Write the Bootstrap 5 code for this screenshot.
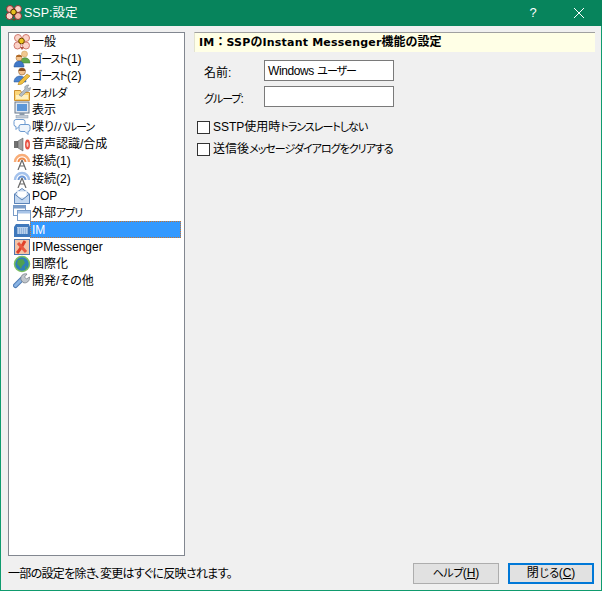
<!DOCTYPE html>
<html lang="ja">
<head>
    <meta charset="UTF-8">
    <title>SSP:設定</title>
    <link href="https://cdn.jsdelivr.net/npm/bootstrap@5.3.2/dist/css/bootstrap.min.css" rel="stylesheet">
    <style>
        html, body { height: 100%; }
        body {
            background: #f0f0f0;
            font-family: "Liberation Sans", "Noto Sans CJK JP", sans-serif;
            font-size: 12px;
            font-feature-settings: "palt";
            color: #000;
            overflow: hidden;
        }
        /* MS PGothic kana are much narrower than Noto's */
        .kana-tight { font-size: 11px; letter-spacing: -1px; }
        .dlg-window { height: 591px; border: 1px solid #0f9b6e; border-top: 0; }
        .dlg-title { height: 26px; background: #07845c; color: #fff; font-size: 12.5px; margin: 0 -1px; }
        .dlg-title svg { display: block; margin: 0 1px 0 5px; }
        .dlg-help { width: 46px; text-align: center; font-size: 13px; }
        .dlg-close { width: 46px; }
        .dlg-close svg { margin: 0; }
        .dlg-body { height: 564px; padding: 6px 6px 0 7px; }
        .tree-box { width: 177px; height: 524px; flex: none; background: #fff; border: 1px solid #828790; padding-right: 3px; }
        .tree-row { height: 17.07px; white-space: nowrap; }
        .tree-row svg { width: 18px; height: 18px; flex: none; margin: 0 -1px 0 4px; display: block; }
        .tree-label { padding: 0 1px 0 2px; height: 17px; line-height: 18px; }
        .tree-row.is-active .tree-label { flex: 1; background: #3399ff; color: #fff; outline: 1px dotted #c9732b; outline-offset: -1px; }
        .panel-col { flex: 1; padding-left: 9px; }
        .panel-head { height: 20px; background: #ffffe6; border-top: 1px solid #a0a0a0; border-left: 1px solid #e3e3d0; font-family: "DejaVu Sans", "Noto Sans CJK JP", sans-serif; font-feature-settings: normal; font-weight: 700; font-size: 12px; line-height: 19px; padding-left: 4px; white-space: nowrap; }
        .head-latin { font-size: 11px; letter-spacing: .2px; }
        .form-wrap { padding: 8px 0 4px 10px; }
        .field-row { height: 26px; }
        .field-label { width: 60px; padding-top: 4px; }
        .field-box { width: 130px; height: 21px; background: #fff; border: 1px solid #7a7a7a; padding-left: 3px; line-height: 20px; }
        .field-latin { letter-spacing: -.4px; }
        .check-row { height: 22px; white-space: nowrap; padding-left: 3px; }
        .check-mark { width: 13px; height: 13px; background: #fff; border: 1px solid #333; margin-right: 3px; }
        .dlg-foot { height: 33px; padding: 2px 1px 0 0; }
        .foot-note { letter-spacing: -.7px; }
        .foot-btn { width: 86px; height: 21px; background: #e1e1e1; border: 1px solid #adadad; border-radius: 0; padding: 0; font-size: 12px; line-height: 19px; color: #000; }
        .foot-btn.is-default { border: 2px solid #0078d7; line-height: 17px; margin-left: 9px; }
    </style>
</head>
<body>

<div class="dlg-window">
    <div class="dlg-title d-flex align-items-center">
        <svg width="18" height="18" viewBox="0 0 18 18"><circle cx="5" cy="5" r="3.5" fill="#f3b6a6" stroke="#8c2f2f"/><circle cx="13" cy="5" r="3.5" fill="#fbd7cb" stroke="#8c2f2f"/><circle cx="4.500" cy="12" r="3.500" fill="#fbd7cb" stroke="#8c2f2f"/><circle cx="13" cy="12" r="3.500" fill="#f3b6a6" stroke="#8c2f2f"/><path d="M7 15l2 2 2-2" fill="#7a3a20"/><circle cx="8.500" cy="8" r="2.800" fill="#e8c020" stroke="#503000"/></svg>
        <span class="flex-grow-1">SSP:設定</span>
        <span class="dlg-help">?</span>
        <span class="dlg-close d-flex justify-content-center"><svg width="12" height="12" viewBox="0 0 12 12"><path d="M1 1l10 10M11 1L1 11" stroke="#fff" fill="none"/></svg></span>
    </div>
    <div class="dlg-body">
        <div class="d-flex">
            <div class="tree-box">
                <div class="tree-row d-flex"><svg viewBox="0 0 18 18"><circle cx="5" cy="5" r="3.500" fill="#fbd3c8" stroke="#d07a70"/><circle cx="13" cy="5" r="3.500" fill="#fbd3c8" stroke="#d07a70"/><circle cx="4.500" cy="12.500" r="3.500" fill="#fbd3c8" stroke="#d07a70"/><circle cx="13" cy="12.500" r="3.500" fill="#fbd3c8" stroke="#d07a70"/><path d="M7 14l2 3 2-3" fill="#b05040"/><circle cx="8.500" cy="8" r="2.800" fill="#eec420" stroke="#6a4a00"/></svg><span class="tree-label">一般</span></div>
                <div class="tree-row d-flex"><svg viewBox="0 0 18 18"><circle cx="11.500" cy="4" r="3" fill="#f0c890" stroke="#c89a50" stroke-width=".5"/><path d="M7 13c0-7 10-7 10 0z" fill="#62a84a" stroke="#3f7a30" stroke-width=".5"/><circle cx="6" cy="8" r="3" fill="#f4c490" stroke="#a06a30" stroke-width=".5"/><path d="M3 7c0-3 6-3 6 0z" fill="#b06a28"/><path d="M1 17c0-8 10-8 10 0z" fill="#3f78c8" stroke="#2a5490" stroke-width=".5"/></svg><span class="tree-label"><span class="kana-tight">ゴースト</span>(1)</span></div>
                <div class="tree-row d-flex"><svg viewBox="0 0 18 18"><circle cx="9" cy="4.500" r="3.500" fill="#f4c490" stroke="#7a4a20" stroke-width=".5"/><path d="M5.500 4c0-4 7-4 7 0z" fill="#8a5020"/><path d="M1 15c0-8 12-8 12 0z" fill="#4a84d0" stroke="#2a5490" stroke-width=".5"/><path d="M6 15l8-8 3 2-8 8-4 1z" fill="#f0c040" stroke="#a07010" stroke-width=".5"/></svg><span class="tree-label"><span class="kana-tight">ゴースト</span>(2)</span></div>
                <div class="tree-row d-flex"><svg viewBox="0 0 18 18"><path d="M1.500 6.500h6l1 2h8v8h-15z" fill="#fbd67a" stroke="#cc8f30"/><rect x="3" y="11" width="12" height="4" fill="#fff0c0"/><path d="M6 11l6-6c-1-3 1-4 4-4l-1.500 2 1 1.500 2-1c0 3-2 4.500-4 4l-5 5z" fill="#b4bcc4" stroke="#737b84" stroke-width=".5"/></svg><span class="tree-label"><span class="kana-tight">フォルダ</span></span></div>
                <div class="tree-row d-flex"><svg viewBox="0 0 18 18"><rect x="2" y="1" width="14" height="11" fill="#e2e8f0" stroke="#68788c"/><rect x="4" y="3" width="10" height="7" fill="#5c96d8"/><rect x="6.500" y="12" width="5" height="2" fill="#8a98a8"/><rect x="3" y="14.500" width="12" height="2.500" fill="#c4ccd6" stroke="#8a98a8" stroke-width=".5"/></svg><span class="tree-label">表示</span></div>
                <div class="tree-row d-flex"><svg viewBox="0 0 18 18"><path d="M3 1.500h7a2 2 0 0 1 2 2v3a2 2 0 0 1-2 2h-4l-3 3v-3a2 2 0 0 1-2-2v-3a2 2 0 0 1 2-2z" fill="#fff" stroke="#6c9ad0"/><path d="M8 6.500h7a2 2 0 0 1 2 2v3a2 2 0 0 1-2 2v3l-3-3h-4a2 2 0 0 1-2-2v-3a2 2 0 0 1 2-2z" fill="#eef4fb" stroke="#6c9ad0"/></svg><span class="tree-label">喋り/<span class="kana-tight">バルーン</span></span></div>
                <div class="tree-row d-flex"><svg viewBox="0 0 18 18"><rect x="1" y="6" width="4" height="7" fill="#707070"/><path d="M5 6l5-3v13l-5-3z" fill="#a0a0a0" stroke="#505050" stroke-width=".5"/><ellipse cx="14.500" cy="9.500" rx="2.500" ry="5" fill="#e85040"/><ellipse cx="14.500" cy="9.500" rx="1" ry="2.500" fill="#fbd0c8"/></svg><span class="tree-label">音声認識/合成</span></div>
                <div class="tree-row d-flex"><svg viewBox="0 0 18 18"><path d="M2 10a7 7 0 0 1 14 0" fill="none" stroke="#f8ad78" stroke-width="2.500"/><path d="M5.500 10a3.500 3.500 0 0 1 7 0" fill="none" stroke="#f08a48" stroke-width="2"/><path d="M9 8l-4 10M9 8l4 10M6.500 14h5" fill="none" stroke="#686868" stroke-width="1.200"/></svg><span class="tree-label">接続(1)</span></div>
                <div class="tree-row d-flex"><svg viewBox="0 0 18 18"><path d="M2 10a7 7 0 0 1 14 0" fill="none" stroke="#a4c2ec" stroke-width="2.500"/><path d="M5.500 10a3.500 3.500 0 0 1 7 0" fill="none" stroke="#6c98d8" stroke-width="2"/><path d="M9 8l-4 10M9 8l4 10M6.500 14h5" fill="none" stroke="#686868" stroke-width="1.200"/></svg><span class="tree-label">接続(2)</span></div>
                <div class="tree-row d-flex"><svg viewBox="0 0 18 18"><path d="M1.500 7l7.500-5.500 7.500 5.500v9.500h-15z" fill="#d8e6f6" stroke="#5c84b8"/><rect x="4" y="4" width="10" height="7" fill="#fff" stroke="#9cb8da" stroke-width=".5"/><path d="M1.500 7l7.500 6 7.500-6v9.500h-15z" fill="#c4d8f0" stroke="#5c84b8"/></svg><span class="tree-label">POP</span></div>
                <div class="tree-row d-flex"><svg viewBox="0 0 18 18"><rect x=".5" y="1.500" width="12" height="10" fill="#fff" stroke="#7a9cc8"/><rect x="1" y="2" width="11" height="2.500" fill="#7a9cc8"/><rect x="4.500" y="6.500" width="13" height="10" fill="#fff" stroke="#7a9cc8"/><rect x="5" y="7" width="12" height="2.500" fill="#a8c4e8"/></svg><span class="tree-label">外部<span class="kana-tight">アプリ</span></span></div>
                <div class="tree-row is-active d-flex"><svg viewBox="0 0 18 18"><path d="M1 6l2-3h13l1 3v10h-16z" fill="#3f78bc"/><rect x="4" y="6" width="11" height="7" fill="#b8d0ec"/><path d="M4 8h11M4 10h11M4 12h11" stroke="#6c98cc" stroke-dasharray="1 1"/></svg><span class="tree-label">IM</span></div>
                <div class="tree-row d-flex"><svg viewBox="0 0 18 18"><rect x="1.500" y="1.500" width="15" height="15" fill="#f2c4a8" stroke="#5078b0"/><path d="M4 15c3-3 5-7 8-12" stroke="#e04028" stroke-width="3" fill="none"/><path d="M5 5l8 9" stroke="#e85840" stroke-width="3"/></svg><span class="tree-label">IPMessenger</span></div>
                <div class="tree-row d-flex"><svg viewBox="0 0 18 18"><circle cx="9" cy="9" r="7.500" fill="#2f80b8" stroke="#7cc060" stroke-width="1.500"/><path d="M5 5l5-1 2 4-3 3-1 3-2-3-2-2z" fill="#4fa050"/><path d="M12 11l2 1-2 3z" fill="#4fa050"/></svg><span class="tree-label">国際化</span></div>
                <div class="tree-row d-flex"><svg viewBox="0 0 18 18"><path d="M2.500 13.500l6-6" stroke="#4f7cb4" stroke-width="5" stroke-linecap="round"/><path d="M2.500 13.500l6-6" stroke="#8ab4e4" stroke-width="3" stroke-linecap="round"/><path d="M8 8c-1-4 2-7 6-6l-2.500 3 2 2 3-2c.5 4-3 7-6.500 5.500z" fill="#c0c6cc" stroke="#6e767e" stroke-width=".7"/></svg><span class="tree-label">開発/その他</span></div>
            </div>
            <div class="panel-col">
                <div class="panel-head"><span class="head-latin">IM</span>：<span class="head-latin">SSP</span>の<span class="head-latin">Instant Messenger</span>機能の設定</div>
                <div class="form-wrap">
                    <div class="field-row d-flex align-items-start"><span class="field-label">名前:</span><span class="field-box"><span class="field-latin">Windows</span> <span class="kana-tight">ユーザー</span></span></div>
                    <div class="field-row d-flex align-items-start"><span class="field-label"><span class="kana-tight">グループ</span>:</span><span class="field-box"></span></div>
                </div>
                <div class="check-row d-flex align-items-center"><span class="check-mark"></span><span>SSTP使用時<span class="kana-tight">トランスレートしない</span></span></div>
                <div class="check-row d-flex align-items-center"><span class="check-mark"></span><span>送信後<span class="kana-tight">メッセージダイアログをクリアする</span></span></div>
            </div>
        </div>
        <div class="dlg-foot d-flex align-items-center">
            <span class="flex-grow-1 foot-note">一部の設定を除き、変更はすぐに反映されます。</span>
            <button type="button" class="btn foot-btn"><span class="kana-tight">ヘルプ</span>(<u>H</u>)</button>
            <button type="button" class="btn foot-btn is-default">閉<span class="kana-tight">じる</span>(<u>C</u>)</button>
        </div>
    </div>
</div>

<script src="https://cdn.jsdelivr.net/npm/bootstrap@5.3.2/dist/js/bootstrap.bundle.min.js"></script>
</body>
</html>
